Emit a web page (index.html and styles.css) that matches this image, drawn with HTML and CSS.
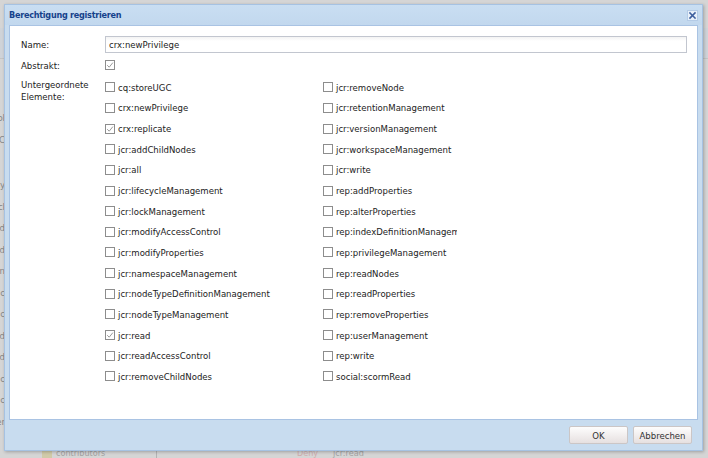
FILE: index.html
```html
<!DOCTYPE html>
<html lang="de">
<head>
<meta charset="utf-8">
<title>Berechtigung registrieren</title>
<link rel="stylesheet" href="styles.css">
</head>
<body>
<div class="page">
  <div class="page-band"></div>
  <div class="page-main">
    <div class="page-left">
      <span>tool</span><span>C</span><span class="gap">cy</span><span>cl</span><span>d</span><span>d</span><span>n</span><span>c</span><span>c</span><span>d</span><span>d</span><span>c</span><span>c</span><span>er</span>
    </div>
  </div>
  <div class="page-bottom">
    <span class="pb-icon"></span><span class="pb-text">contributors</span><span class="pb-sep"></span><span class="pb-deny">Deny</span><span class="pb-text2">jcr:read</span>
  </div>
</div>

<div class="dialog">
  <div class="dlg-header">
    <span class="dlg-title">Berechtigung registrieren</span>
    <span class="dlg-close"><svg width="11" height="11" viewBox="0 0 11 11"><rect x="0.5" y="0.5" width="10" height="10" fill="#e9f1fa" stroke="#b4cbe6"/><path d="M3 3 L8 8 M8 3 L3 8" stroke="#3e5f9e" stroke-width="1.6" stroke-linecap="square"/></svg></span>
  </div>
  <div class="dlg-body">
    <div class="form">
      <label class="lbl">Name:</label>
      <div class="field"><input class="text" type="text" value="crx:newPrivilege"></div>
      <label class="lbl">Abstrakt:</label>
      <div class="field"><span class="cb checked"><svg width="8" height="8" viewBox="0 0 8 8"><path d="M1.2 4.2 L3.2 6.2 L6.9 1.6" fill="none" stroke="#9a9a9a" stroke-width="1"/></svg></span></div>
      <label class="lbl lbl-multi">Untergeordnete<br>Elemente:</label>
      <div class="group">
        <div class="item"><span class="cb"></span>cq:storeUGC</div>
        <div class="item"><span class="cb"></span>crx:newPrivilege</div>
        <div class="item"><span class="cb checked"><svg width="8" height="8" viewBox="0 0 8 8"><path d="M1.2 4.2 L3.2 6.2 L6.9 1.6" fill="none" stroke="#9a9a9a" stroke-width="1"/></svg></span>crx:replicate</div>
        <div class="item"><span class="cb"></span>jcr:addChildNodes</div>
        <div class="item"><span class="cb"></span>jcr:all</div>
        <div class="item"><span class="cb"></span>jcr:lifecycleManagement</div>
        <div class="item"><span class="cb"></span>jcr:lockManagement</div>
        <div class="item"><span class="cb"></span>jcr:modifyAccessControl</div>
        <div class="item"><span class="cb"></span>jcr:modifyProperties</div>
        <div class="item"><span class="cb"></span>jcr:namespaceManagement</div>
        <div class="item"><span class="cb"></span>jcr:nodeTypeDefinitionManagement</div>
        <div class="item"><span class="cb"></span>jcr:nodeTypeManagement</div>
        <div class="item"><span class="cb checked"><svg width="8" height="8" viewBox="0 0 8 8"><path d="M1.2 4.2 L3.2 6.2 L6.9 1.6" fill="none" stroke="#9a9a9a" stroke-width="1"/></svg></span>jcr:read</div>
        <div class="item"><span class="cb"></span>jcr:readAccessControl</div>
        <div class="item"><span class="cb"></span>jcr:removeChildNodes</div>
        <div class="item"><span class="cb"></span>jcr:removeNode</div>
        <div class="item"><span class="cb"></span>jcr:retentionManagement</div>
        <div class="item"><span class="cb"></span>jcr:versionManagement</div>
        <div class="item"><span class="cb"></span>jcr:workspaceManagement</div>
        <div class="item"><span class="cb"></span>jcr:write</div>
        <div class="item"><span class="cb"></span>rep:addProperties</div>
        <div class="item"><span class="cb"></span>rep:alterProperties</div>
        <div class="item"><span class="cb"></span>rep:indexDefinitionManagement</div>
        <div class="item"><span class="cb"></span>rep:privilegeManagement</div>
        <div class="item"><span class="cb"></span>rep:readNodes</div>
        <div class="item"><span class="cb"></span>rep:readProperties</div>
        <div class="item"><span class="cb"></span>rep:removeProperties</div>
        <div class="item"><span class="cb"></span>rep:userManagement</div>
        <div class="item"><span class="cb"></span>rep:write</div>
        <div class="item"><span class="cb"></span>social:scormRead</div>
      </div>
    </div>
  </div>
  <div class="dlg-footer">
    <button class="btn">OK</button>
    <button class="btn">Abbrechen</button>
  </div>
</div>
</body>
</html>
```
FILE: styles.css
```css
html, body {
  margin: 0;
  padding: 0;
}
body {
  width: 708px;
  height: 458px;
  overflow: hidden;
  background: #d5d5d5;
  font-family: "DejaVu Sans Condensed", "DejaVu Sans", sans-serif;
  font-stretch: condensed;
  font-size: 9.5px;
  color: #222;
}

/* background page (behind the mask) */
.page {
  height: 458px;
  display: flex;
  flex-direction: column;
  overflow: hidden;
}
.page-band {
  height: 30px;
  margin-top: 28px;
  background: #cfd3d8;
  border-bottom: 1px solid #c4c4c4;
}
.page-main {
  flex: 1;
  display: flex;
}
.page-left {
  width: 5px;
  overflow: hidden;
  display: flex;
  flex-direction: column;
  align-items: flex-end;
  padding-top: 48px;
  color: #858585;
  line-height: 21.5px;
}
.page-left span {
  white-space: nowrap;
}
.page-left .gap {
  margin-top: 24px;
}
.page-bottom {
  height: 11px;
  display: flex;
  align-items: flex-end;
  color: #a3a3a3;
  font-size: 9px;
  line-height: 10px;
  padding-left: 42px;
}
.pb-icon {
  width: 10px;
  height: 9px;
  background: #d0caa8;
  margin-right: 4px;
}
.pb-text { width: 100px; }
.pb-sep {
  width: 1px;
  height: 12px;
  background: #b3b3b3;
  margin-right: 140px;
}
.pb-deny { color: #cfadad; width: 36px; }

/* dialog window */
.dialog {
  position: absolute;
  left: 4px;
  top: 4px;
  width: 699px;
  height: 447px;
  box-sizing: border-box;
  border: 1px solid #a6c2e2;
  background: #c8dcef;
  box-shadow: 1px 1px 3px rgba(0, 0, 0, 0.25);
  display: flex;
  flex-direction: column;
}
.dlg-header {
  height: 20px;
  flex: none;
  display: flex;
  align-items: center;
  justify-content: space-between;
  padding: 0 4px 0 4px;
  background: linear-gradient(#c9def2, #c2d8ee);
}
.dlg-title {
  font-weight: bold;
  font-size: 9px;
  letter-spacing: -0.25px;
  color: #15428b;
}
.dlg-close {
  display: block;
  width: 11px;
  height: 11px;
}
.dlg-close svg { display: block; }

.dlg-body {
  flex: 1;
  margin: 0 4px;
  background: #fff;
  border: 1px solid #a9c3e3;
  overflow: hidden;
}
.form {
  display: grid;
  grid-template-columns: 84px 1fr;
  grid-template-rows: 17px 24px auto;
  padding: 10px 10px 0 11px;
}
.lbl {
  align-self: center;
  color: #222;
}
.lbl-multi {
  align-self: start;
  padding-top: 2px;
  line-height: 11.5px;
}
.field {
  display: flex;
  align-items: center;
}
.text {
  width: 100%;
  height: 17px;
  box-sizing: border-box;
  border: 1px solid #c2c6cf;
  background: linear-gradient(#f3f3f3, #fff 4px);
  padding: 0 3px;
  margin: 0;
  font: inherit;
  color: #222;
  outline: none;
}

.group {
  display: grid;
  grid-template-rows: repeat(15, 20.65px);
  grid-template-columns: 218px 134px;
  grid-auto-flow: column;
}
.item {
  display: flex;
  align-items: center;
  white-space: nowrap;
  overflow: hidden;
}
.cb {
  flex: none;
  width: 10px;
  height: 10px;
  box-sizing: border-box;
  border: 1px solid #8d8d8d;
  background: #fff;
  margin-right: 3px;
  display: flex;
  align-items: center;
  justify-content: center;
}
.cb svg { display: block; }

.dlg-footer {
  height: 30px;
  flex: none;
  display: flex;
  justify-content: flex-end;
  align-items: flex-start;
  gap: 5px;
  padding: 6px 10px 0 0;
  box-sizing: border-box;
}
.btn {
  width: 59px;
  height: 18px;
  box-sizing: border-box;
  border: 1px solid #cbc6c6;
  border-radius: 2px;
  background: linear-gradient(#fdfdfd, #f1eded 55%, #e6e0e0);
  font: inherit;
  color: #333;
  padding: 0;
  margin: 0;
}
```
